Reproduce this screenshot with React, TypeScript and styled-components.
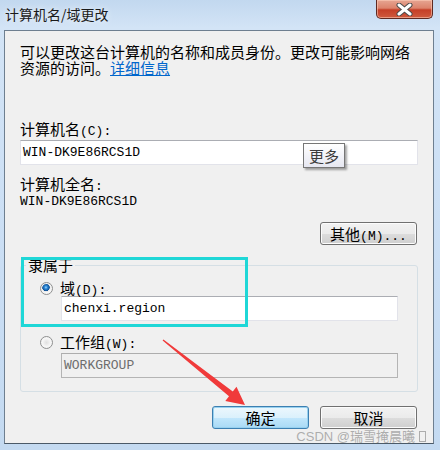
import React from 'react';
import styled, {createGlobalStyle} from 'styled-components';

const GlobalStyle = createGlobalStyle`
  html, body {
    margin: 0;
    padding: 0;
    background: #c6dcf2;
  }
  body {
    font-family: "Noto Sans CJK SC", "Liberation Sans", sans-serif;
    font-size: 15px;
    color: #000;
  }
`;

const Window = styled.div`
  width: 440px;
  height: 450px;
  box-sizing: border-box;
  padding: 0 6px 6px 4px;
  background: linear-gradient(180deg, #c2d8ef 0%, #d3e4f6 28px, #cadef4 60%, #c4daf1 100%);
  display: flex;
  flex-direction: column;
`;

const TitleBar = styled.div`
  height: 30px;
  display: flex;
  align-items: flex-start;
`;

const Title = styled.div`
  padding-left: 1px;
  line-height: 28px;
  font-size: 14px;
  color: #1a1a1a;
  text-shadow: 0 0 6px rgba(255, 255, 255, 0.9);
`;

const CloseButton = styled.div`
  margin-left: auto;
  margin-right: 1px;
  width: 57px;
  height: 19px;
  box-sizing: border-box;
  border: 1px solid #5e2a22;
  border-top: none;
  border-radius: 0 0 5px 5px;
  background: linear-gradient(180deg, #e6a592 0%, #dc836c 45%, #c53f27 55%, #cf5a3e 100%);
  box-shadow: inset 0 0 0 1px rgba(255, 210, 190, 0.55);
  display: flex;
  align-items: center;
  justify-content: center;
`;

const Panel = styled.div`
  position: relative;
  height: 414px;
  box-sizing: border-box;
  border: 1px solid #6e7f90;
  border-bottom-color: #4b5a68;
  background: #f0f0f0;
  padding: 13px 15px 0 15px;
`;

const Intro = styled.div`
  height: 32px;
  line-height: 16px;
`;

const Link = styled.a`
  color: #0066cc;
  text-decoration: underline;
  cursor: pointer;
`;

const Mono = styled.span`
  font-family: "Liberation Mono", monospace;
  font-size: 13px;
  line-height: 1;
`;

const Label = styled.div<{gap: number}>`
  margin-top: ${({gap}) => gap}px;
  height: 16px;
  line-height: 16px;
  white-space: nowrap;
`;

const Value = styled.div`
  margin-top: 2px;
  height: 16px;
  line-height: 16px;
  font-family: "Liberation Mono", monospace;
  font-size: 13px;
`;

const InputWrap = styled.div`
  position: relative;
  margin-top: 3px;
`;

const TextBox = styled.div<{disabled?: boolean; indent?: number}>`
  height: 25px;
  box-sizing: border-box;
  margin-left: ${({indent}) => indent || 0}px;
  padding-left: 2px;
  border: 1px solid ${({disabled}) => (disabled ? '#b4b4b4' : '#e2e3ea')};
  border-top-color: ${({disabled}) => (disabled ? '#adadad' : '#abadb3')};
  background: ${({disabled}) => (disabled ? '#f0f0f0' : '#fff')};
  color: ${({disabled}) => (disabled ? '#6d6d6d' : '#000')};
  font-family: "Liberation Mono", monospace;
  font-size: 13px;
  line-height: 23px;
`;

const Tip = styled.div`
  position: absolute;
  left: 283px;
  top: 3px;
  width: 42px;
  height: 25px;
  box-sizing: border-box;
  border: 1px solid #767676;
  background: linear-gradient(180deg, #ffffff, #e6e7f1);
  box-shadow: 2px 2px 2px rgba(0, 0, 0, 0.35);
  color: #3c3c3c;
  text-align: center;
  line-height: 23px;
`;

const ButtonRow = styled.div<{gap: number}>`
  margin-top: ${({gap}) => gap}px;
  padding-right: 1px;
  display: flex;
  justify-content: flex-end;
  gap: 11px;
`;

const Button = styled.button<{primary?: boolean}>`
  width: 97px;
  height: 23px;
  padding: 0;
  border: 1px solid ${({primary}) => (primary ? '#3c7fb1' : '#707070')};
  border-radius: 3px;
  background: ${({primary}) =>
    primary
      ? 'linear-gradient(180deg, #ecf7fd 0%, #dbf1fc 50%, #c2e7fc 50%, #a9daf5 100%)'
      : 'linear-gradient(180deg, #f2f2f2 0%, #ebebeb 50%, #dddddd 50%, #cfcfcf 100%)'};
  box-shadow: inset 0 0 0 1px ${({primary}) => (primary ? '#98d1ef' : '#fcfcfc')};
  font-family: "Noto Sans CJK SC", sans-serif;
  font-size: 15px;
  line-height: 21px;
  color: #000;
`;

const GroupBox = styled.div`
  margin-top: 20px;
  border: 1px solid #d5dfe5;
  border-radius: 3px;
  padding: 0 19px 13px 19px;
`;

const Legend = styled.div`
  width: fit-content;
  height: 16px;
  margin: -9px 0 0 -14px;
  padding: 0 2px;
  background: #f0f0f0;
  line-height: 16px;
`;

const RadioRow = styled.div<{gap: number}>`
  margin-top: ${({gap}) => gap}px;
  height: 16px;
  display: flex;
  align-items: center;
  gap: 7px;
  line-height: 16px;
`;

const Radio = styled.span<{checked?: boolean}>`
  width: 13px;
  height: 13px;
  box-sizing: border-box;
  border-radius: 50%;
  border: 1px solid #8e8f8f;
  background: ${({checked}) =>
    checked
      ? 'radial-gradient(circle at 45% 40%, #9fd6ff 0, #2d8ad8 1.5px, #0e4f95 3.5px, #e8e8e8 4px, #ffffff 6px)'
      : 'radial-gradient(circle at 50% 50%, #e0e0e0 0, #f0f0f0 3px, #ffffff 6px)'};
  box-shadow: inset 0 0 0 1px #f4f4f4;
`;

const Highlight = styled.div`
  position: absolute;
  left: 16px;
  top: 226px;
  width: 227px;
  height: 70px;
  box-sizing: border-box;
  border: 3px solid #1fd7d7;
  pointer-events: none;
`;

const ArrowLayer = styled.svg`
  position: absolute;
  left: -5px;
  top: -31px;
  pointer-events: none;
`;

const Watermark = styled.div`
  position: absolute;
  right: 7px;
  bottom: 0;
  font-family: "Liberation Sans", "Noto Sans CJK SC", sans-serif;
  font-size: 13px;
  line-height: 13px;
  color: rgba(150, 150, 150, 0.75);
  display: flex;
  align-items: center;
  gap: 4px;
`;

const MissingGlyph = styled.span`
  width: 5px;
  height: 9px;
  border: 1px solid rgba(150, 150, 150, 0.75);
`;

const App = () => {
    return (
        <Window>
            <GlobalStyle/>
            <TitleBar>
                <Title>计算机名/域更改</Title>
                <CloseButton>
                    <svg width="17" height="13" viewBox="0 0 17 13">
                        <path d="M3 2 L14 11 M14 2 L3 11" stroke="#4a4a4a" strokeWidth="5" strokeLinecap="round"/>
                        <path d="M3 2 L14 11 M14 2 L3 11" stroke="#ffffff" strokeWidth="3" strokeLinecap="round"/>
                    </svg>
                </CloseButton>
            </TitleBar>
            <Panel>
                <Intro>
                    可以更改这台计算机的名称和成员身份。更改可能影响网络资源的访问。<Link>详细信息</Link>
                </Intro>
                <Label gap={45}>计算机名<Mono>(C):</Mono></Label>
                <InputWrap>
                    <TextBox>WIN-DK9E86RCS1D</TextBox>
                    <Tip>更多</Tip>
                </InputWrap>
                <Label gap={11}>计算机全名<Mono>:</Mono></Label>
                <Value>WIN-DK9E86RCS1D</Value>
                <ButtonRow gap={12}>
                    <Button>其他<Mono>(M)...</Mono></Button>
                </ButtonRow>
                <GroupBox>
                    <Legend>隶属于</Legend>
                    <RadioRow gap={7}>
                        <Radio checked/>
                        <span>域<Mono>(D):</Mono></span>
                    </RadioRow>
                    <TextBox indent={21}>chenxi.region</TextBox>
                    <RadioRow gap={13}>
                        <Radio/>
                        <span>工作组<Mono>(W):</Mono></span>
                    </RadioRow>
                    <InputWrap>
                        <TextBox indent={21} disabled>WORKGROUP</TextBox>
                    </InputWrap>
                </GroupBox>
                <ButtonRow gap={14}>
                    <Button primary>确定</Button>
                    <Button>取消</Button>
                </ButtonRow>
                <Highlight/>
                <ArrowLayer width="440" height="450" viewBox="0 0 440 450">
                    <polygon
                        points="162.6,340.5 163.4,339.5 232.8,391.4 236.5,386.7 245,405 225.3,400.9 229,396.2"
                        fill="#f03a3a"
                    />
                </ArrowLayer>
                <Watermark>CSDN @瑞雪掩晨曦<MissingGlyph/></Watermark>
            </Panel>
        </Window>
    );
};

export default App;
